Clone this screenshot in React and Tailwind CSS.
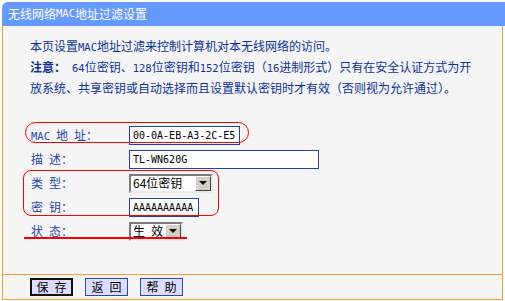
import React from 'react'

// half-width latin runs, close to the 6px latin of the old bitmap font
function L({ children }) {
  return <span className="font-['DejaVu_Sans_Mono',monospace] text-[10.5px]">{children}</span>
}

const SP = '\u2002'

function Row({ label, children }) {
  return (
    <div className="h-[24px] flex items-center">
      <div className="w-[98px] text-[#1f45a8] whitespace-pre">{label}</div>
      {children}
    </div>
  )
}

function TextBox({ value, className }) {
  return (
    <div className={`h-[19px] bg-white border border-[#2142a3] flex items-center pl-[3px] text-black whitespace-nowrap overflow-hidden font-['DejaVu_Sans_Mono',monospace] text-[10px] ${className}`}>
      {value}
    </div>
  )
}

function Select({ value, className }) {
  return (
    <div className={`h-[19px] bg-white border-2 border-t-[#7b7b7b] border-l-[#7b7b7b] border-b-[#ececec] border-r-[#ececec] flex items-center text-black ${className}`}>
      <span className="flex-1 pl-[2px] whitespace-pre leading-none">{value}</span>
      <span className="w-[16px] h-[15px] bg-[#d4d0c8] border border-t-white border-l-white border-b-[#404040] border-r-[#404040] flex items-center justify-center">
        <span className="w-0 h-0 border-x-[4px] border-x-transparent border-t-[4px] border-t-black" />
      </span>
    </div>
  )
}

function Btn({ children, focused }) {
  return (
    <button
      className={`w-[43px] h-[18px] bg-[#dcdcff] text-black leading-none whitespace-pre flex items-center justify-center ${focused ? 'border-2 border-[#111]' : 'border border-[#2a4aaa]'}`}
    >
      {children}
    </button>
  )
}

export default function App() {
  return (
    <div className="w-[505px] h-[301px] bg-white pt-[2px] pl-[2px] font-['Noto_Sans_CJK_SC','Noto_Sans',sans-serif] text-[12px]">
      <div className="w-[503px] h-[298px] flex flex-col">
        <div className="h-[24px] bg-[#6699ff] rounded-tl-[6px] text-white flex items-center pl-[6px]">
          无线网络<L>MAC</L>地址过滤设置
        </div>

        <div className="w-[501px] flex-1 relative bg-[#f5f5f5] border-x border-[#ff9933] pl-[27px] pt-[10px]">
          <div className="leading-[20px] text-[#0a3399]">
            <p>本页设置<L>MAC</L>地址过滤来控制计算机对本无线网络的访问。</p>
            <p className="whitespace-pre">
              <b>注意：</b>{SP}<L>64</L>位密钥、<L>128</L>位密钥和<L>152</L>位密钥（<L>16</L>进制形式）只有在安全认证方式为开
              {'\n'}放系统、共享密钥或自动选择而且设置默认密钥时才有效（否则视为允许通过）。
            </p>
          </div>

          <div className="mt-[25px] pl-[1px]">
            <Row label={<><L>MAC</L>{SP}地{SP}址：</>}>
              <TextBox value="00-0A-EB-A3-2C-E5" className="w-[111px]" />
            </Row>
            <Row label={`描${SP}述：`}>
              <TextBox value="TL-WN620G" className="w-[190px]" />
            </Row>
            <Row label={`类${SP}型：`}>
              <Select value="64位密钥" className="w-[84px]" />
            </Row>
            <Row label={`密${SP}钥：`}>
              <TextBox value="AAAAAAAAAA" className="w-[70px]" />
            </Row>
            <Row label={`状${SP}态：`}>
              <Select value={`生${SP}效`} className="w-[54px]" />
            </Row>
          </div>

          {/* red marks drawn over the form */}
          <div className="absolute left-[22px] top-[96px] w-[224px] h-[21px] rounded-full border-[1.5px] border-[#ff0000]" />
          <div className="absolute left-[20px] top-[144px] w-[196px] h-[46px] rounded-[8px] border-[1.5px] border-[#ff0000]" />
          <div className="absolute left-[21px] top-[211px] w-[163px] h-[2px] bg-[#ff0000]" />
        </div>

        <div className="w-[501px] h-[26px] bg-[#f5f5f5] border border-[#ff9933] flex items-center gap-[12px] pl-[27px]">
          <Btn focused>{`保${SP}存`}</Btn>
          <Btn>{`返${SP}回`}</Btn>
          <Btn>{`帮${SP}助`}</Btn>
        </div>
      </div>
    </div>
  )
}
